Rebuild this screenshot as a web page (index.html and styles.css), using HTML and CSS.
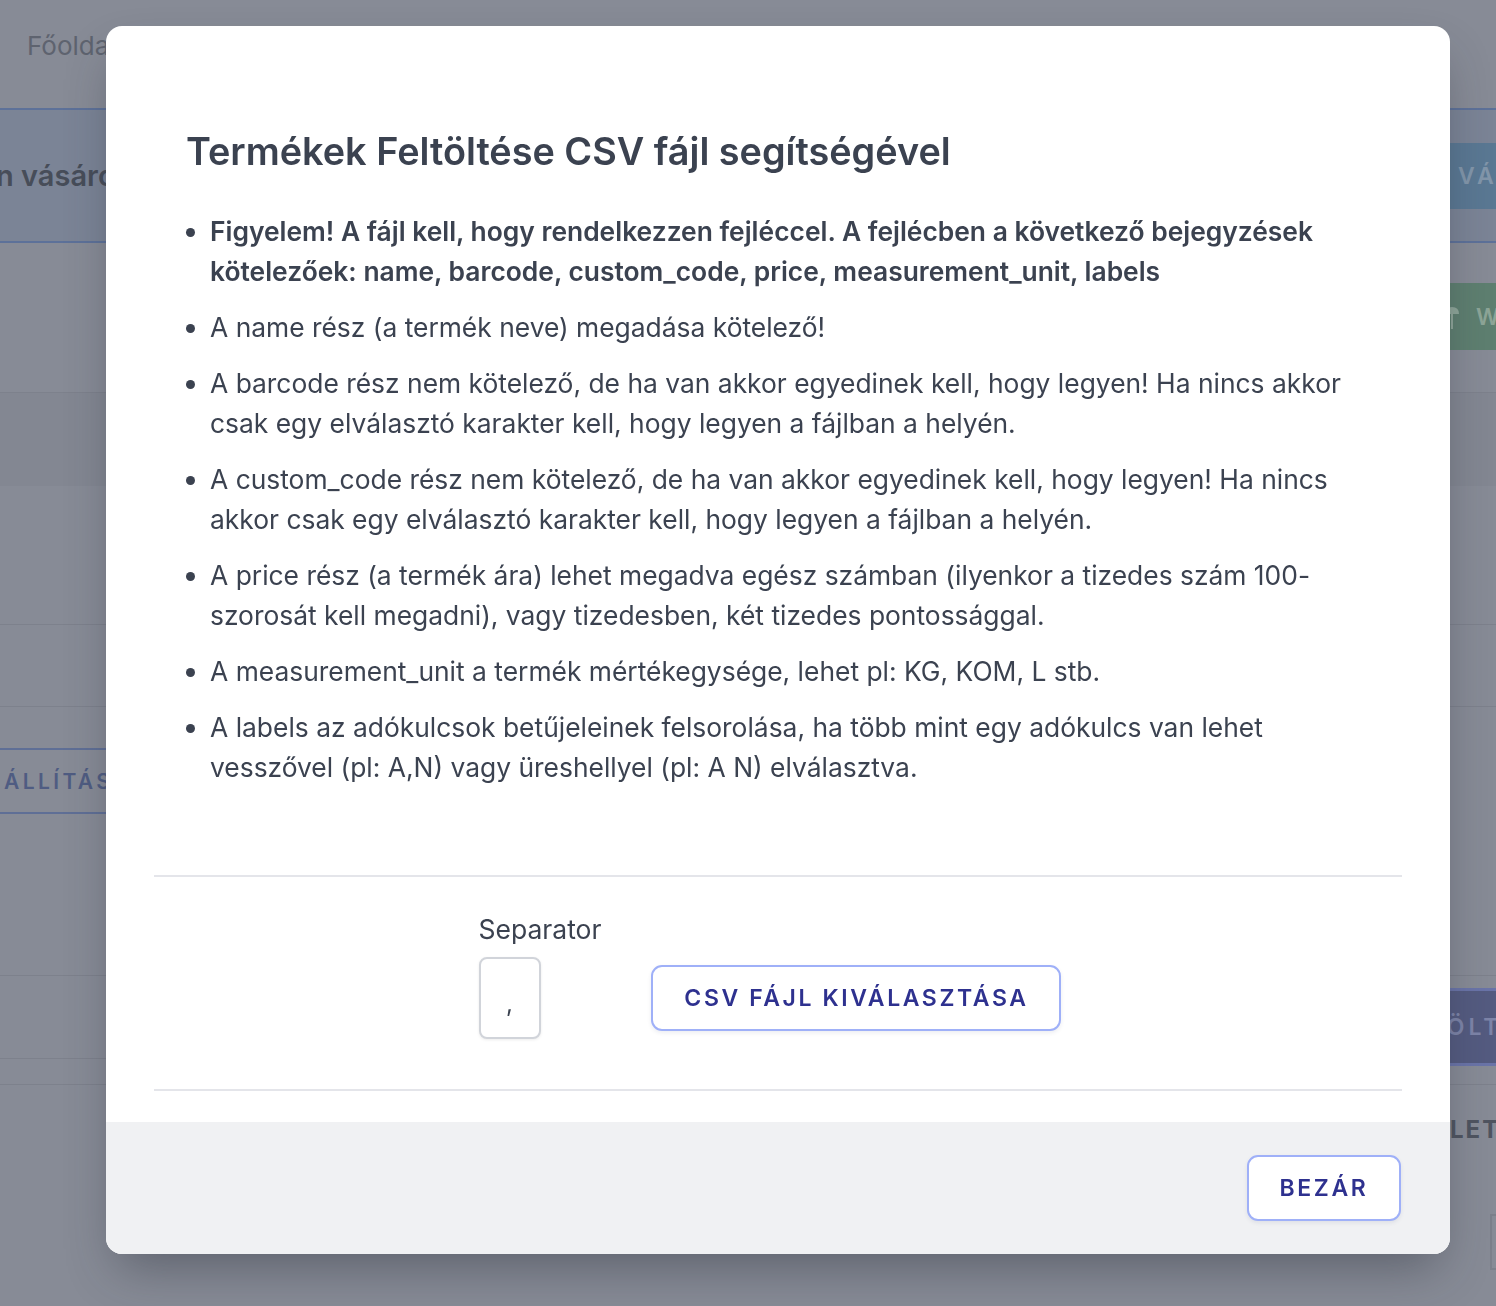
FILE: index.html
```html
<!DOCTYPE html>
<html lang="hu">
<head>
<meta charset="utf-8">
<title>Termékek feltöltése</title>
<link rel="stylesheet" href="styles.css">
</head>
<body>
<div class="page">
  <header class="topbar"><span class="crumb">Főoldal</span></header>
  <section class="band band-blue">
    <span class="band-title">n vásárolt</span>
    <span class="btn-bg btn-blue">VÁSÁRLÁS</span>
  </section>
  <section class="row row-green">
    <span></span>
    <span class="btn-bg btn-green"><svg class="bg-icon" width="16" height="24" viewBox="0 0 16 24"><path d="M1 9 Q1 2 8 2 Q15 2 15 9 Z M7 9 H9 V24 H7 Z" fill="#8fa79a"/></svg>W</span>
  </section>
  <section class="row row-dark"></section>
  <section class="row row-h138"></section>
  <section class="row row-h82"></section>
  <section class="row row-tall">
    <span class="btn-bg btn-outline">ÁLLÍTÁS</span>
  </section>
  <section class="row row-h83">
    <span></span>
    <span class="btn-bg btn-indigo">FELTÖLTÉS</span>
  </section>
  <section class="row row-h26"></section>
  <section class="row row-last">
    <span></span>
    <div class="right-stack">
      <span class="bg-label">LETÖLTÉS</span>
      <span class="bg-box"></span>
    </div>
  </section>
</div>

<div class="modal" role="dialog">
  <div class="modal-body">
    <div class="info">
      <h2 class="modal-title">Termékek Feltöltése CSV fájl segítségével</h2>
      <ul class="rules">
        <li class="strong">Figyelem! A fájl kell, hogy rendelkezzen fejléccel. A fejlécben a következő bejegyzések kötelezőek: name, barcode, custom_code, price, measurement_unit, labels</li>
        <li>A name rész (a termék neve) megadása kötelező!</li>
        <li>A barcode rész nem kötelező, de ha van akkor egyedinek kell, hogy legyen! Ha nincs akkor csak egy elválasztó karakter kell, hogy legyen a fájlban a helyén.</li>
        <li>A custom_code rész nem kötelező, de ha van akkor egyedinek kell, hogy legyen! Ha nincs akkor csak egy elválasztó karakter kell, hogy legyen a fájlban a helyén.</li>
        <li>A price rész (a termék ára) lehet megadva egész számban (ilyenkor a tizedes szám 100-szorosát kell megadni), vagy tizedesben, két tizedes pontossággal.</li>
        <li>A measurement_unit a termék mértékegysége, lehet pl: KG, KOM, L stb.</li>
        <li>A labels az adókulcsok betűjeleinek felsorolása, ha több mint egy adókulcs van lehet vesszővel (pl: A,N) vagy üreshellyel (pl: A N) elválasztva.</li>
      </ul>
    </div>
    <div class="upload">
      <div class="field">
        <label class="field-label" for="sep">Separator</label>
        <input class="sep-input" id="sep" type="text" value=",">
      </div>
      <button class="btn-outline-primary btn-file" type="button">CSV fájl kiválasztása</button>
    </div>
  </div>
  <div class="modal-footer">
    <button class="btn-outline-primary btn-close" type="button">Bezár</button>
  </div>
</div>
</body>
</html>
```
FILE: styles.css
```css
* { box-sizing: border-box; }
html, body { margin: 0; padding: 0; }
body {
  width: 1496px;
  height: 1306px;
  overflow: hidden;
  background: #878b96;
  font-family: Inter, "Noto Sans", sans-serif;
  color: #374151;
}

/* ---------- dimmed background page ---------- */
.page { width: 1496px; overflow: hidden; }
.topbar {
  height: 108px;
  display: flex;
  align-items: center;
  padding: 0 0 18px 27px;
}
.crumb { font-size: 26px; color: #5e636f; }
.band {
  height: 135px;
  border-top: 2px solid #5d7199;
  border-bottom: 2px solid #5d7199;
  background: #7b8496;
  display: flex;
  align-items: center;
  justify-content: space-between;
}
.band-title { font-size: 29px; font-weight: 600; color: #474d59; margin-left: -4px; white-space: nowrap; }
.btn-bg {
  display: inline-flex;
  align-items: center;
  gap: 10px;
  font-size: 23px;
  font-weight: 600;
  letter-spacing: 4px;
  white-space: nowrap;
  overflow: hidden;
}
.btn-blue {
  background: #5a7893;
  color: #8296aa;
  height: 66px;
  width: 200px;
  padding-left: 8px;
  margin-right: -154px;
}
.row {
  display: flex;
  align-items: center;
  justify-content: space-between;
  border-bottom: 1px solid #7d818c;
}
.row-green { height: 150px; align-items: flex-start; padding-top: 40px; }
.btn-green {
  background: #5e7f70;
  color: #8da597;
  height: 67px;
  width: 206px;
  padding-left: 0;
  gap: 16px;
  margin-right: -154px;
}
.bg-icon { flex: none; }
.row-dark { height: 94px; background: #838792; border-bottom-color: #878b96; }
.row-h138 { height: 138px; }
.row-h82 { height: 82px; }
.row-tall { height: 269px; align-items: flex-start; padding-top: 41px; }
.btn-outline {
  height: 66px;
  width: 180px;
  border-top: 2px solid #5f6f96;
  border-bottom: 2px solid #5f6f96;
  color: #4f5c82;
  padding-left: 4px;
  font-size: 21px;
  letter-spacing: 3.4px;
}
.row-h83 { height: 83px; align-items: flex-start; padding-top: 12px; overflow: visible; }
.btn-indigo {
  height: 78px;
  width: 300px;
  background: #545b80;
  color: #7d84a8;
  border-top: 3px solid #6a74a8;
  border-bottom: 3px solid #6a74a8;
  margin-right: -154px;
  padding-left: 28px;
}
.row-h26 { height: 26px; }
.row-last { align-items: flex-start; border-bottom: 0; }
.right-stack {
  display: flex;
  flex-direction: column;
  align-items: flex-start;
  margin-right: -154px;
  width: 200px;
}
.bg-label { font-size: 24px; font-weight: 700; color: #4f5460; letter-spacing: 2px; margin-top: 30px; }
.bg-box { width: 60px; height: 56px; border: 2px solid #7c808b; margin-top: 70px; margin-left: 40px; }

/* ---------- modal ---------- */
.modal {
  position: fixed;
  left: 106px;
  top: 26px;
  width: 1344px;
  border-radius: 16px;
  overflow: hidden;
  background: #fff;
  box-shadow: 0 24px 50px -12px rgba(40, 44, 56, 0.45);
}
.modal-body { padding: 48px 48px 31px; }
.info {
  padding: 57px 32px 88px;
  border-bottom: 2px solid #e4e5ea;
}
.modal-title {
  margin: 0 0 40px;
  font-size: 37.8px;
  line-height: 40px;
  font-weight: 600;
  color: #3b4250;
}
.rules {
  margin: 0;
  padding-left: 24px;
  font-size: 26.4px;
  line-height: 40px;
  color: #3b4250;
}
.rules li { margin-bottom: 16px; }
.rules li:last-child { margin-bottom: 0; }
.rules li.strong { font-weight: 600; }

.upload {
  display: flex;
  justify-content: center;
  align-items: flex-end;
  gap: 50px;
  padding: 36px 16px 50px 0;
  border-bottom: 2px solid #e4e5ea;
}
.field { display: flex; flex-direction: column; gap: 12px; }
.field-label { font-size: 26.5px; line-height: 32px; color: #3b4250; }
.sep-input {
  width: 62px;
  height: 82px;
  border: 2px solid #d1d4da;
  border-radius: 8px;
  text-align: center;
  font-family: inherit;
  font-size: 24px;
  color: #3b4250;
  padding: 10px 0 0;
  box-shadow: 0 1px 3px rgba(0, 0, 0, 0.08);
  outline: none;
}
.btn-outline-primary {
  background: #fff;
  border: 2px solid #9fb0f8;
  border-radius: 11px;
  height: 66px;
  font-family: inherit;
  font-size: 23px;
  font-weight: 600;
  letter-spacing: 2.6px;
  text-transform: uppercase;
  color: #2e318f;
  box-shadow: 0 2px 4px rgba(30, 40, 90, 0.08);
  cursor: pointer;
}
.btn-file { width: 410px; margin-bottom: 8px; }
.modal-footer {
  background: #f0f1f3;
  padding: 33px 49px 33px 48px;
  display: flex;
  justify-content: flex-end;
}
.btn-close { width: 154px; }
```
